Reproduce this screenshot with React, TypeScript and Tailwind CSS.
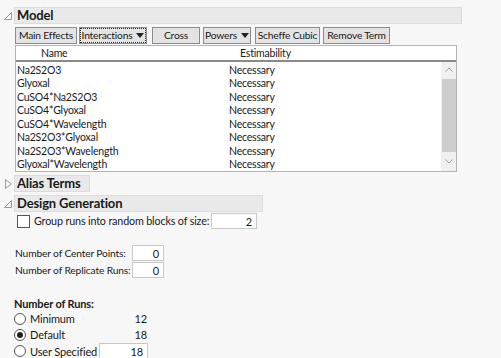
import React from 'react';

const font = { fontFamily: 'Lato, "Open Sans", sans-serif' };

const terms = [
  'Na2S2O3',
  'Glyoxal',
  'CuSO4*Na2S2O3',
  'CuSO4*Glyoxal',
  'CuSO4*Wavelength',
  'Na2S2O3*Glyoxal',
  'Na2S2O3*Wavelength',
  'Glyoxal*Wavelength',
];

const OpenTri = () => (
  <svg width="8" height="8" viewBox="0 0 8 8" className="shrink-0">
    <path d="M7.5 0.5 L7.5 7.5 L0.5 7.5 Z" fill="none" stroke="#9a9a9a" strokeWidth="1" />
  </svg>
);

const ClosedTri = () => (
  <svg width="7" height="10" viewBox="0 0 7 10" className="shrink-0">
    <path d="M0.5 0.5 L6.5 5 L0.5 9.5 Z" fill="none" stroke="#9a9a9a" strokeWidth="1" />
  </svg>
);

const Caret = () => (
  <svg width="8" height="5" viewBox="0 0 8 5" className="ml-[4px]">
    <path d="M0 0 H8 L4 5 Z" fill="#222" />
  </svg>
);

const Btn = ({ children, dotted, w }: { children: React.ReactNode; dotted?: boolean; w: string }) => (
  <div
    className={`h-[17px] shrink-0 flex items-center justify-center border border-[#8c8c8c] bg-[#e3e3e3] text-[10.25px] leading-none text-[#1a1a1a] ${w}`}
  >
    <span className={`flex items-center h-[13px] px-[1px] ${dotted ? 'outline-1 outline-dotted outline-[#333]' : ''}`}>
      {children}
    </span>
  </div>
);

const Field = ({ value, w }: { value: string; w: string }) => (
  <div className={`h-[16px] ${w} shrink-0 bg-white border border-[#c8c8c8] flex items-center justify-end pr-[4px] text-[11px] leading-none`}>
    {value}
  </div>
);

const Radio = ({ on }: { on?: boolean }) => (
  <div className="w-[12px] h-[12px] shrink-0 rounded-full border border-[#555] bg-white flex items-center justify-center">
    {on && <div className="w-[6px] h-[6px] rounded-full bg-[#222]" />}
  </div>
);

export default function App() {
  return (
    <div className="w-[501px] h-[358px] bg-[#f7f7f7] text-[#1a1a1a] overflow-hidden whitespace-nowrap tracking-[-0.15px]" style={font}>
      {/* Model */}
      <div className="pt-[7px] flex items-center">
        <div className="w-[14px] flex justify-center pl-[2px]"><OpenTri /></div>
        <div className="w-[448px] h-[17px] bg-[#e9e9e9] border border-[#dcdcdc] flex items-center pl-[2px] text-[13px] font-bold leading-none">
          Model
        </div>
      </div>
      <div className="pl-[15px] pt-[3px] flex tracking-[-0.2px]">
        <Btn w="w-[62px]">Main Effects</Btn>
        <div className="w-[2px]" />
        <Btn dotted w="w-[68px]">Interactions <Caret /></Btn>
        <div className="w-[5px]" />
        <Btn w="w-[48px]">Cross</Btn>
        <div className="w-[3px]" />
        <Btn w="w-[48px]">Powers <Caret /></Btn>
        <div className="w-[4px]" />
        <Btn w="w-[65px]">Scheffe Cubic</Btn>
        <div className="w-[3px]" />
        <Btn w="w-[67px]">Remove Term</Btn>
      </div>
      <div className="ml-[15px] mt-[1px] w-[442px] border border-[#b4b4b4] bg-white tracking-[-0.2px]">
        <div className="h-[16px] flex items-center text-[10.5px] leading-none border-b-2 border-[#8a8a8a]">
          <div className="w-[224px] pl-[25px]">Name</div>
          <div>Estimability</div>
        </div>
        <div className="flex h-[109px]">
          <div className="flex-1 pt-[1px]">
            {terms.map((t) => (
              <div key={t} className="h-[13.5px] flex items-center text-[10.5px] leading-none">
                <div className="w-[213px] pl-[1px]">{t}</div>
                <div>Necessary</div>
              </div>
            ))}
          </div>
          <div className="w-[15px] bg-[#f0f0f0] flex flex-col items-center">
            <svg width="8" height="5" viewBox="0 0 8 5" className="mt-[5px]">
              <path d="M0.5 4.5 L4 1 L7.5 4.5" fill="none" stroke="#a0a0a0" strokeWidth="1" />
            </svg>
            <div className="mt-[7px] w-[14px] h-[73px] bg-[#cdcdcd]" />
            <svg width="8" height="5" viewBox="0 0 8 5" className="mt-[7px]">
              <path d="M0.5 0.5 L4 4 L7.5 0.5" fill="none" stroke="#a0a0a0" strokeWidth="1" />
            </svg>
          </div>
        </div>
      </div>

      {/* Alias Terms */}
      <div className="mt-[3px] flex items-center">
        <div className="w-[14px] flex justify-center pl-[2px]"><ClosedTri /></div>
        <div className="w-[76px] h-[17px] bg-[#e9e9e9] border border-[#dcdcdc] flex items-center pl-[2px] text-[13px] font-bold leading-none">
          Alias Terms
        </div>
      </div>

      {/* Design Generation */}
      <div className="mt-[3px] flex items-center">
        <div className="w-[14px] flex justify-center pl-[2px]"><OpenTri /></div>
        <div className="w-[249px] h-[17px] bg-[#e9e9e9] border border-[#dcdcdc] flex items-center pl-[2px] text-[13px] font-bold leading-none">
          Design Generation
        </div>
      </div>
      <div className="pl-[17px] pt-[1px] h-[17px] flex items-center text-[10.75px] leading-none">
        <div className="w-[13px] h-[13px] shrink-0 border border-[#555] bg-white" />
        <div className="ml-[4px] w-[177px]">Group runs into random blocks of size:</div>
        <Field value="2" w="w-[46px]" />
      </div>

      <div className="pl-[15px] pt-[16px] flex flex-col gap-[1px] text-[10.25px] leading-none">
        <div className="flex items-center">
          <div className="w-[117px]">Number of Center Points:</div>
          <Field value="0" w="w-[32px]" />
        </div>
        <div className="flex items-center">
          <div className="w-[117px]">Number of Replicate Runs:</div>
          <Field value="0" w="w-[32px]" />
        </div>
      </div>

      <div className="pl-[14px] pt-[18px] text-[11px] leading-none">
        <div className="font-bold h-[14px] flex items-center">Number of Runs:</div>
        <div className="flex flex-col gap-[1px] mt-[1px]">
          <div className="flex items-center h-[15px]">
            <Radio />
            <div className="ml-[4px] w-[103px]">Minimum</div>
            <div className="w-[14px] text-right">12</div>
          </div>
          <div className="flex items-center h-[15px]">
            <Radio on />
            <div className="ml-[4px] w-[103px]">Default</div>
            <div className="w-[14px] text-right">18</div>
          </div>
          <div className="flex items-center h-[16px]">
            <Radio />
            <div className="ml-[4px] w-[69px]">User Specified</div>
            <Field value="18" w="w-[49px]" />
          </div>
        </div>
      </div>
    </div>
  );
}
